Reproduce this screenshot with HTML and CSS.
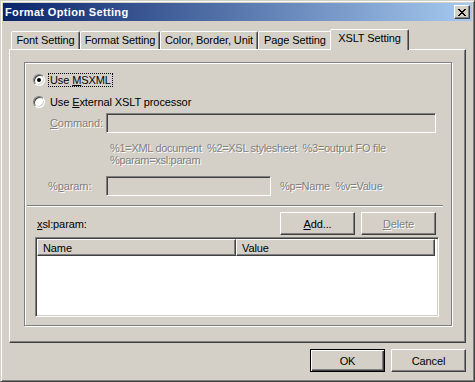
FILE: index.html
```html
<!DOCTYPE html>
<html>
<head>
<meta charset="utf-8">
<title>Format Option Setting</title>
<link rel="stylesheet" href="styles.css">
</head>
<body>
<div class="window">
  <div class="titlebar">
    <span class="title">Format Option Setting</span>
    <div class="close">
      <svg width="8" height="7" viewBox="0 0 8 7" shape-rendering="crispEdges"><path fill="#000" d="M0 0h2v1H0zM6 0h2v1H6zM1 1h2v1H1zM5 1h2v1H5zM2 2h4v1H2zM3 3h2v1H3zM2 4h4v1H2zM1 5h2v1H1zM5 5h2v1H5zM0 6h2v1H0zM6 6h2v1H6z"/></svg>
    </div>
  </div>
  <div class="content">
    <div class="tabs">
      <div class="tab tab-font">Font Setting</div>
      <div class="tab tab-format">Format Setting</div>
      <div class="tab tab-color">Color, Border, Unit</div>
      <div class="tab tab-page">Page Setting</div>
      <div class="tab tab-xslt selected">XSLT Setting</div>
    </div>
    <div class="panel">
      <div class="group">
        <div class="opt-row opt-first">
          <span class="radio"><span class="dot"></span></span>
          <span class="opt-label focus">Use <u>M</u>SXML</span>
        </div>
        <div class="opt-row opt-second">
          <span class="radio"></span>
          <span class="opt-label">Use <u>E</u>xternal XSLT processor</span>
        </div>
        <div class="field-row cmd-row">
          <span class="field-label disabled cmd-label"><u>C</u>ommand:</span>
          <span class="field cmd-field"></span>
        </div>
        <div class="hint disabled">%1=XML document  %2=XSL stylesheet  %3=output FO file
%param=xsl:param</div>
        <div class="field-row param-row">
          <span class="field-label disabled param-label">%<u>p</u>aram:</span>
          <span class="field param-field"></span>
          <span class="param-hint disabled">%p=Name  %v=Value</span>
        </div>
        <div class="separator"></div>
        <div class="btn-row">
          <span class="list-label"><u>x</u>sl:param:</span>
          <div class="btn"><span><u>A</u>dd...</span></div>
          <div class="btn disabled"><span><u>D</u>elete</span></div>
        </div>
        <div class="list">
          <div class="list-header">
            <div class="hcell hcell-name">Name</div>
            <div class="hcell hcell-value">Value</div>
          </div>
        </div>
      </div>
    </div>
    <div class="footer">
      <div class="btn default">OK</div>
      <div class="btn">Cancel</div>
    </div>
  </div>
</div>
</body>
</html>
```
FILE: styles.css
```css
* { box-sizing: border-box; }
html, body { margin: 0; padding: 0; }
body {
  font-family: "Liberation Sans", Arial, sans-serif;
  font-size: 11px;
  letter-spacing: -0.1px;
  color: #000;
  background: #D4D0C8;
}
u { text-decoration: underline; text-underline-offset: 1px; }

.window {
  width: 475px;
  height: 382px;
  background: #D4D0C8;
  border: 1px solid;
  border-color: #D4D0C8 #404040 #404040 #D4D0C8;
  box-shadow: inset 1px 1px #fff, inset -1px -1px #808080;
  padding: 2px;
}

.titlebar {
  height: 18px;
  background: linear-gradient(to right, #0A246A, #A6CAF0);
  display: flex;
  align-items: center;
  justify-content: space-between;
  padding: 0 2px 0 2px;
}
.title {
  color: #fff;
  font-weight: bold;
  font-size: 11px;
  letter-spacing: 0.35px;
  line-height: 14px;
}
.close {
  width: 16px;
  height: 14px;
  background: #D4D0C8;
  border: 1px solid;
  border-color: #fff #404040 #404040 #fff;
  box-shadow: inset -1px -1px #808080;
  display: flex;
  align-items: center;
  justify-content: center;
}
.close svg { display: block; }

.content { padding: 0 6px; }

.tabs {
  display: flex;
  align-items: flex-end;
  height: 20px;
  margin-top: 8px;
  padding-left: 2px;
}
.tab {
  height: 18px;
  border: 1px solid;
  border-bottom: none;
  border-color: #fff #404040 transparent #fff;
  box-shadow: inset -1px 0 #808080;
  border-radius: 2px 2px 0 0;
  display: flex;
  align-items: center;
  justify-content: center;
  white-space: nowrap;
  background: #D4D0C8;
  line-height: 13px;
}
.tab-font { width: 69px; }
.tab-format { width: 80px; }
.tab-color { width: 98px; }
.tab-page { width: 74px; }
.tab-xslt { width: 79px; }
.tab.selected {
  height: 21px;
  margin-left: -2px;
  margin-bottom: -1px;
  padding-bottom: 3px;
  position: relative;
  z-index: 1;
}

.panel {
  height: 294px;
  border: 1px solid;
  border-color: #fff #404040 #404040 #fff;
  box-shadow: inset -1px -1px #808080;
  padding: 12px 0 0 14px;
}

.group {
  width: 428px;
  height: 264px;
  border: 1px solid #808080;
  box-shadow: inset 1px 1px #fff, 1px 1px #fff;
}

.opt-row {
  display: flex;
  align-items: center;
  height: 16px;
  padding-left: 8px;
}
.opt-first { margin-top: 9px; }
.opt-second { margin-top: 6px; }
.radio {
  width: 12px;
  height: 12px;
  border-radius: 50%;
  border: 1px solid;
  border-color: #808080 #fff #fff #808080;
  box-shadow: inset 1px 1px #404040, inset -1px -1px #D4D0C8;
  background: #fff;
  display: flex;
  align-items: center;
  justify-content: center;
  flex: none;
}
.dot {
  width: 4px;
  height: 4px;
  border-radius: 50%;
  background: #000;
}
.opt-label {
  margin-left: 3px;
  border: 1px solid transparent;
  padding: 0 1px;
  line-height: 12px;
  white-space: nowrap;
}
.opt-label.focus { border: 1px dotted #000; }

.disabled {
  color: #808080;
  text-shadow: 1px 1px 0 #fff;
}

.field-row {
  display: flex;
  align-items: center;
  height: 20px;
}
.cmd-row { margin-top: 3px; padding-left: 25px; }
.cmd-label { width: 56px; }
.cmd-field { width: 330px; }
.param-row { margin-top: 10px; padding-left: 23px; }
.param-label { width: 58px; }
.param-field { width: 165px; }
.param-hint { margin-left: 9px; white-space: pre; letter-spacing: -0.25px; }
.field {
  height: 20px;
  border: 1px solid;
  border-color: #808080 #fff #fff #808080;
  box-shadow: inset 1px 1px #404040, inset -1px -1px #D4D0C8;
  background: #D4D0C8;
}

.hint {
  margin-top: 9px;
  padding-left: 85px;
  line-height: 12px;
  white-space: pre;
  letter-spacing: -0.3px;
}

.separator {
  margin-top: 9px;
  margin-left: 2px;
  width: 416px;
  height: 2px;
  border-top: 1px solid #808080;
  border-bottom: 1px solid #fff;
}

.btn-row {
  display: flex;
  align-items: center;
  gap: 6px;
  width: 411px;
  margin-top: 5px;
  padding-left: 12px;
}
.list-label { flex: 1; }

.btn {
  width: 75px;
  height: 23px;
  border: 1px solid;
  border-color: #fff #404040 #404040 #fff;
  box-shadow: inset -1px -1px #808080;
  background: #D4D0C8;
  display: flex;
  align-items: center;
  justify-content: center;
  flex: none;
}
.btn.default {
  border-color: #000;
  box-shadow: inset 1px 1px #fff, inset -1px -1px #404040, inset -2px -2px #808080;
}

.list {
  margin-top: 2px;
  margin-left: 10px;
  width: 404px;
  height: 80px;
  border: 1px solid;
  border-color: #808080 #fff #fff #808080;
  box-shadow: inset 1px 1px #404040, inset -1px -1px #D4D0C8;
  background: #fff;
  padding: 1px;
}
.list-header {
  display: flex;
  height: 17px;
}
.hcell {
  border: 1px solid;
  border-color: #fff #404040 #404040 #fff;
  box-shadow: inset -1px -1px #808080;
  background: #D4D0C8;
  padding-left: 5px;
  display: flex;
  align-items: center;
}
.hcell-name { width: 199px; }
.hcell-value { width: 199px; }

.footer {
  display: flex;
  justify-content: flex-end;
  gap: 6px;
  margin-top: 6px;
}
```
